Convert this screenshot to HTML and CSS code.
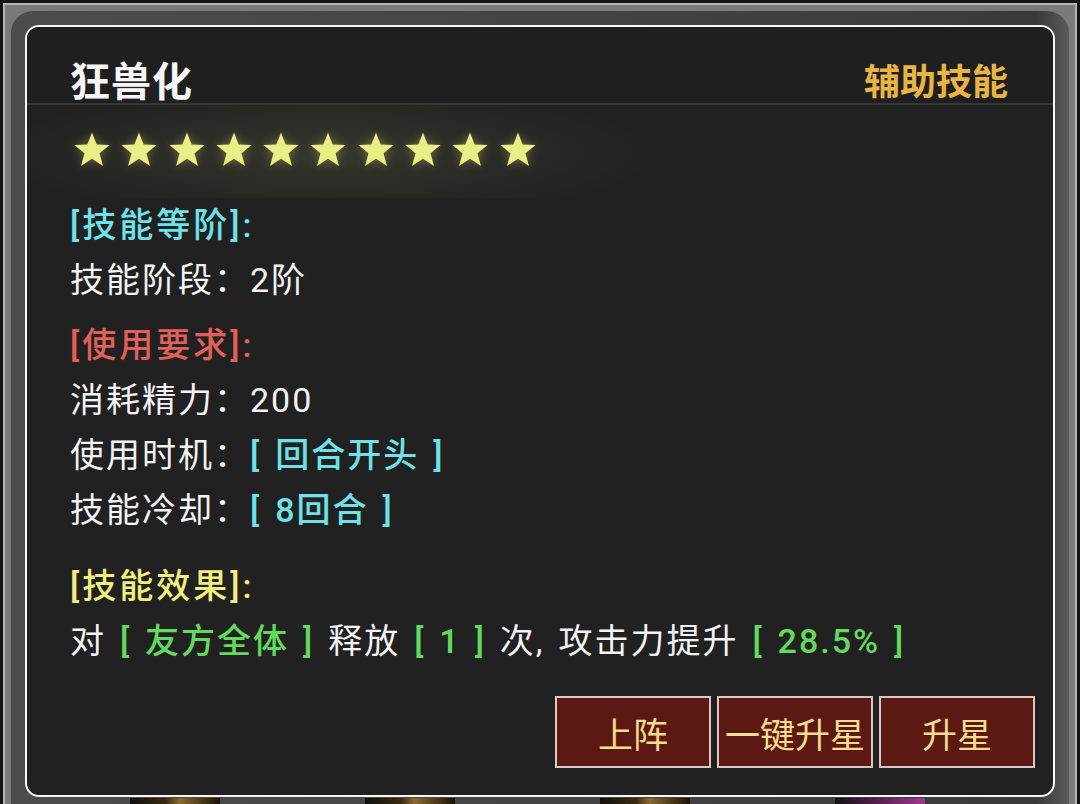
FILE: index.html
```html
<!DOCTYPE html>
<html lang="zh-CN">
<head>
    <meta charset="UTF-8">
    <meta name="viewport" content="width=device-width, initial-scale=1.0">
    <title>技能详情</title>
    <link rel="stylesheet" href="styles.css">
</head>
<body>
    <div class="frame">
        <div class="frame-inner">
            <div class="panel">
                <div class="header">
                    <span class="skill-name">狂兽化</span>
                    <span class="skill-type">辅助技能</span>
                </div>

                <div class="stars" id="stars"></div>

                <div class="section">
                    <div class="line head cyan">[技能等阶]:</div>
                    <div class="line">技能阶段：2阶</div>
                </div>

                <div class="section gap-s">
                    <div class="line head red">[使用要求]:</div>
                    <div class="line">消耗精力：200</div>
                    <div class="line">使用时机：<span class="val cyan">[ 回合开头 ]</span></div>
                    <div class="line">技能冷却：<span class="val cyan">[ 8回合 ]</span></div>
                </div>

                <div class="section gap-l">
                    <div class="line head yellow">[技能效果]:</div>
                    <div class="line">对 <span class="val green">[ 友方全体 ]</span> 释放 <span class="val green">[ 1 ]</span> 次, 攻击力提升 <span class="val green">[ 28.5% ]</span></div>
                </div>

                <div class="actions">
                    <button class="btn">上阵</button>
                    <button class="btn">一键升星</button>
                    <button class="btn">升星</button>
                </div>
            </div>

            <div class="cards">
                <div class="card-top"></div>
                <div class="card-top"></div>
                <div class="card-top"></div>
                <div class="card-top purple"></div>
            </div>
        </div>
    </div>

    <script>
        // 星级
        const starCount = 10;
        const starSvg = '<svg width="40" height="38" viewBox="0 0 24 22.7"><polygon points="12,0.8 14.8,8 22.6,8.4 16.5,13.3 18.6,20.9 12,16.6 5.4,20.9 7.5,13.3 1.4,8.4 9.2,8" fill="#e9ef84"/></svg>';
        const stars = document.getElementById('stars');
        for (let i = 0; i < starCount; i++) {
            stars.insertAdjacentHTML('beforeend', starSvg);
        }
    </script>
</body>
</html>
```

FILE: styles.css
```css
html, body {
    margin: 0;
    height: 804px;
    overflow: hidden;
}
body {
    background: #151515;
    font-family: Roboto, "Noto Sans CJK SC", sans-serif;
    color: #f4f4f4;
}
.frame {
    box-sizing: border-box;
    margin: 3px 3px 0;
    border: 2px solid #b4b4b4;
    border-bottom: none;
    background: #7a7a7a;
    padding: 6px 6px 0;
    height: 801px;
    overflow: hidden;
}
.frame-inner {
    box-sizing: border-box;
    border-radius: 22px 22px 0 0;
    background: linear-gradient(to right, #4c4c4c, #424242 60%, #3a3a3a 97%, #5a5a5a);
    padding: 14px 14px 0;
    height: 100%;
}
.panel {
    border: 2px solid #f6f6f6;
    border-radius: 14px;
    background: #212121;
    padding-bottom: 27px;
}
.header {
    display: flex;
    justify-content: space-between;
    align-items: center;
    padding: 36px 45px 0 43px;
    line-height: 40px;
    border-bottom: 2px solid #363636;
    background: #1f1f1f;
    border-radius: 12px 12px 0 0;
}
.skill-name {
    font-size: 40px;
    font-weight: bold;
    color: #f6f6f6;
    letter-spacing: 1px;
}
.skill-type {
    font-size: 36px;
    font-weight: bold;
    color: #e8b545;
}
.stars {
    display: flex;
    gap: 7.3px;
    padding: 26px 45px 29px;
    background: radial-gradient(ellipse 330px 66px at 300px 52%, rgba(225, 230, 140, 0.11), rgba(225, 230, 140, 0) 100%);
}
.stars svg {
    filter: drop-shadow(0 0 5px rgba(235, 240, 120, 0.35));
}
.section {
    padding: 0 43px;
}
.gap-s {
    margin-top: 10px;
}
.gap-l {
    margin-top: 21px;
}
.line {
    font-size: 34px;
    line-height: 55px;
    letter-spacing: 2px;
    word-spacing: 3.5px;
    white-space: nowrap;
}
.head {
    font-weight: 500;
    letter-spacing: 3px;
}
.val {
    font-weight: 500;
}
.cyan {
    color: #6ee2e8;
}
.red {
    color: #e2605a;
}
.yellow {
    color: #f1f07e;
}
.green {
    color: #63d95f;
}
.actions {
    display: flex;
    justify-content: flex-end;
    gap: 6px;
    margin-top: 27px;
    padding-right: 18px;
}
.btn {
    width: 156px;
    height: 72px;
    border: 2px solid #dcc8c2;
    background: #5c1914;
    color: #f7dc8c;
    font-family: Roboto, "Noto Sans CJK SC", sans-serif;
    font-size: 35px;
    padding: 0;
    white-space: nowrap;
    cursor: pointer;
}
.btn:hover {
    background: #6e2019;
}
.cards {
    display: flex;
    gap: 145px;
    padding-left: 105px;
    margin-top: 1px;
}
.card-top {
    width: 90px;
    height: 10px;
    background: linear-gradient(to right, #101010, #3a2a12 40%, #8a6a30 55%, #1a1208);
}
.card-top.purple {
    background: linear-gradient(to right, #121212, #5a2050 50%, #a03a90);
}
```
